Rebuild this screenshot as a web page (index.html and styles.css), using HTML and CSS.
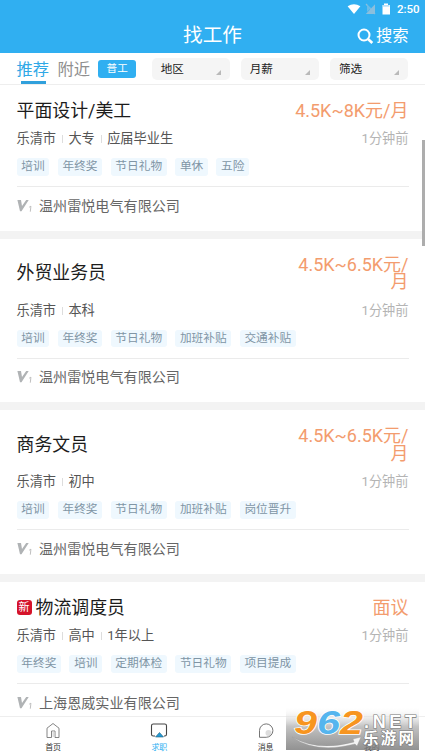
FILE: index.html
```html
<!DOCTYPE html>
<html lang="zh-CN">
<head>
<meta charset="utf-8">
<title>找工作</title>
<link rel="stylesheet" href="styles.css">
</head>
<body>
<svg class="defs" width="0" height="0">
  <symbol id="level" viewBox="0 0 16 14">
    <path d="M.4 1H4L5 7 9.200 1h2.500L4.500 12.200H3z" fill="#b0b3b5"/>
    <path d="M12.200 8.200l1.700-1-.6 5.500" fill="none" stroke="#b8b8b8" stroke-width=".9"/>
  </symbol>
</svg>
<div class="app">
  <header class="header">
    <div class="status">
      <svg class="status-icons" width="44" height="14" viewBox="0 0 44 14">
        <path d="M.6 4.300Q7 0 13.400 4.300L7 12z" fill="#fff"/>
        <path d="M28 2.200V12h-9.200z" fill="#8bbfdd"/>
        <path d="M19 2l9 10" stroke="#8bbfdd" stroke-width="1.200"/>
        <path d="M20 3v7l4-4z" fill="#69bce9"/>
        <path d="M37 1.500h4V3h2v9.500h-7.500V3H37z" fill="#fff"/>
        <path d="M36 3h6.500v1.700H36z" fill="#b9e1f8"/>
      </svg>
      <span>2:50</span>
    </div>
    <div class="titlebar">
      <h1>找工作</h1>
      <div class="search">
        <svg width="17" height="17" viewBox="0 0 17 17"><circle cx="7" cy="7" r="5.500" fill="none" stroke="#fff" stroke-width="2"/><path d="M11 11l4.300 4" stroke="#fff" stroke-width="2.600"/></svg>
        <span>搜索</span>
      </div>
    </div>
  </header>
  <nav class="filters">
    <span class="tab active">推荐</span><span class="tab">附近</span><span class="chip">普工</span>
    <div class="drop">地区</div><div class="drop">月薪</div><div class="drop">筛选</div>
  </nav>
  <main class="list">
    <article class="card">
      <div class="top"><h2>平面设计/美工</h2><b class="pay">4.5K~8K元/月</b></div>
      <div class="meta"><span>乐清市</span><span>大专</span><span>应届毕业生</span><time>1分钟前</time></div>
      <div class="tags"><i>培训</i><i>年终奖</i><i>节日礼物</i><i>单休</i><i>五险</i></div>
      <div class="company"><svg width="16" height="14"><use href="#level"/></svg>温州雷悦电气有限公司</div>
    </article>
    <article class="card">
      <div class="top"><h2>外贸业务员</h2><b class="pay">4.5K~6.5K元/<br>月</b></div>
      <div class="meta"><span>乐清市</span><span>本科</span><time>1分钟前</time></div>
      <div class="tags"><i>培训</i><i>年终奖</i><i>节日礼物</i><i>加班补贴</i><i>交通补贴</i></div>
      <div class="company"><svg width="16" height="14"><use href="#level"/></svg>温州雷悦电气有限公司</div>
    </article>
    <article class="card">
      <div class="top"><h2>商务文员</h2><b class="pay">4.5K~6.5K元/<br>月</b></div>
      <div class="meta"><span>乐清市</span><span>初中</span><time>1分钟前</time></div>
      <div class="tags"><i>培训</i><i>年终奖</i><i>节日礼物</i><i>加班补贴</i><i>岗位晋升</i></div>
      <div class="company"><svg width="16" height="14"><use href="#level"/></svg>温州雷悦电气有限公司</div>
    </article>
    <article class="card">
      <div class="top"><em class="new">新</em><h2>物流调度员</h2><b class="pay">面议</b></div>
      <div class="meta"><span>乐清市</span><span>高中</span><span>1年以上</span><time>1分钟前</time></div>
      <div class="tags"><i>年终奖</i><i>培训</i><i>定期体检</i><i>节日礼物</i><i>项目提成</i></div>
      <div class="company"><svg width="16" height="14"><use href="#level"/></svg>上海恩威实业有限公司</div>
    </article>
  </main>
  <nav class="bottom">
    <div class="item">
      <svg width="18" height="18" viewBox="0 0 18 18" fill="none" stroke="#777" stroke-width=".9"><path d="M3 16.500V7.200L9 2.500l6 4.700v9.300h-4V10H7.500v6.500z"/><path d="M8.500 10.500h2v5.500h-2z" fill="#ddd" stroke="none"/></svg>
      <span>首页</span>
    </div>
    <div class="item on">
      <svg width="18" height="18" viewBox="0 0 18 18"><path d="M5 15H3.300Q1.500 15 1.500 13.200V4.800Q1.500 3 3.300 3h11.400q1.800 0 1.800 1.800v8.400q0 1.800-1.800 1.800H14" fill="none" stroke="#444" stroke-width="1.100"/><path d="M5.500 16l4-4.500 4 4.500z" fill="#249bd5" stroke="#24617e" stroke-width=".6"/></svg>
      <span>求职</span>
    </div>
    <div class="item">
      <svg width="18" height="18" viewBox="0 0 18 18"><circle cx="11.500" cy="12" r="3" fill="#ddd"/><path d="M2.500 16.300V9.500a6.700 6.700 0 1 1 6.700 6.800z" fill="none" stroke="#666" stroke-width=".9"/></svg>
      <span>消息</span>
    </div>
    <div class="item"><svg width="18" height="18"></svg><span>我的</span></div>
  </nav>
  <div class="scrollbar"></div>
  <svg class="watermark" width="133" height="43" viewBox="0 0 133 43">
    <defs>
      <linearGradient id="shade" x2="0" y2="1"><stop offset="0" stop-color="#fff" stop-opacity=".1"/><stop offset=".45" stop-color="#bdbdbd" stop-opacity=".9"/><stop offset="1" stop-color="#777" stop-opacity=".8"/></linearGradient>
    </defs>
    <rect width="133" height="43" fill="url(#shade)"/>
    <g class="digits">
      <text x="8" y="27" textLength="23" lengthAdjust="spacingAndGlyphs" fill="#f79520">9</text>
      <text x="31" y="27" textLength="23" lengthAdjust="spacingAndGlyphs" fill="#55b5ee">6</text>
      <text x="54" y="27" textLength="23" lengthAdjust="spacingAndGlyphs" fill="#f79520">2</text>
    </g>
    <text class="net" x="78" y="21" textLength="52" lengthAdjust="spacing">.NET</text>
    <path d="M6 30Q32 45 68 35l-1-3 8-2-4 9-2-2Q30 47 6 30z" fill="#f4f4f4" stroke="#999" stroke-width=".4"/>
    <text class="site" x="77" y="37" textLength="51" lengthAdjust="spacing">乐游网</text>
  </svg>
</div>
</body>
</html>
```
FILE: styles.css
```css
* { box-sizing: border-box; }
body {
  margin: 0;
  background: #fff;
  font-family: Roboto, "Noto Sans CJK SC", sans-serif;
  color: #222;
}
h1, h2 { margin: 0; font-weight: 400; }
i, em, b { font-style: normal; font-weight: 400; }
.defs { position: absolute; }
.app {
  position: relative;
  width: 425px;
  height: 756px;
  overflow: hidden;
  display: flex;
  flex-direction: column;
}
.header { flex: none; height: 53px; background: #30aff1; color: #fff; }
.status {
  height: 18px;
  display: flex;
  justify-content: flex-end;
  align-items: center;
  gap: 5px;
  padding-right: 6px;
  font-size: 11.500px;
  font-weight: 500;
}
.status span { width: 22px; line-height: 18px; }
.status-icons { margin-right: 1px; }
.titlebar {
  height: 35px;
  display: grid;
  grid-template-columns: 1fr auto 1fr;
  align-items: center;
  padding: 1px 16.500px 0;
}
.titlebar h1 { grid-column: 2; font-size: 19.600px; line-height: 34px; }
.search {
  justify-self: end;
  display: flex;
  align-items: center;
  gap: 2px;
  font-size: 16.300px;
  line-height: 34px;
}
.filters {
  flex: none;
  height: 32px;
  display: flex;
  align-items: center;
  padding: 0 17px 0 16.500px;
  border-bottom: 1px solid #eee;
}
.tab {
  flex: none;
  height: 31px;
  line-height: 34px;
  font-size: 16.300px;
  white-space: nowrap;
  color: #8f8f8f;
  margin-right: 8.500px;
}
.tab.active {
  color: #30a8e6;
  background: linear-gradient(#30a0dc, #30a0dc) 4.500px 100% / 25px 3.500px no-repeat;
}
.chip {
  flex: none;
  width: 38px;
  height: 18px;
  margin: 0 15.500px 0 -.5px;
  border-radius: 3px;
  background: #30aff1;
  color: #fff;
  font-size: 10.600px;
  line-height: 18px;
  text-align: center;
}
.drop {
  flex: 1;
  height: 22px;
  margin-right: 11px;
  padding: 0 9px;
  border-radius: 5px;
  background: #f5f5f5;
  font-size: 11.600px;
  line-height: 22px;
  display: flex;
  justify-content: space-between;
}
.drop:last-child { margin-right: 0; }
.drop::after {
  content: "";
  align-self: flex-end;
  margin-bottom: 4.500px;
  border-left: 5px solid transparent;
  border-bottom: 5px solid #b9b9b9;
}
.list { flex: 1; min-height: 0; overflow: hidden; }
.card {
  padding: 16.600px 16.500px 0;
  border-bottom: 8px solid #f3f3f3;
}
.top { display: flex; align-items: center; line-height: 17.500px; }
.top h2 { font-size: 17.900px; color: #1c1c1c; }
.pay { margin-left: auto; text-align: right; font-size: 18px; color: #f39c6e; }
.new {
  width: 15px;
  height: 15px;
  margin-right: 4px;
  border-radius: 3px;
  background: #d5132a;
  color: #fff;
  font-size: 11px;
  line-height: 15px;
  text-align: center;
}
.meta {
  display: flex;
  align-items: center;
  height: 18px;
  margin-top: 11px;
  font-size: 13.200px;
  line-height: 18px;
  color: #555;
}
.meta span + span { display: flex; align-items: center; }
.meta span + span::before { content: ""; width: 1px; height: 8px; margin: 0 5.700px; background: #ddd; }
.meta time { margin-left: auto; color: #b4b4b4; }
.tags { display: flex; gap: 8.200px; margin-top: 10.200px; }
.tags i {
  height: 17.500px;
  padding: 0 4.800px;
  border-radius: 3px;
  background: #eff8fe;
  color: #8095a5;
  font-size: 11.700px;
  line-height: 17px;
}
.company {
  display: flex;
  align-items: center;
  gap: 6.500px;
  height: 44.900px;
  margin-top: 10.300px;
  padding-bottom: 6.200px;
  border-top: 1px solid #ebebeb;
  font-size: 14.100px;
  line-height: 18px;
  color: #666;
}
.bottom {
  flex: none;
  height: 40px;
  display: grid;
  grid-template-columns: repeat(4, 1fr);
  border-top: 1px solid #eee;
  background: #fff;
}
.item {
  display: flex;
  flex-direction: column;
  align-items: center;
  padding-top: 4px;
  font-size: 8px;
  line-height: 18px;
  color: #333;
}
.item.on { color: #30aff1; }
.scrollbar { position: absolute; right: 0; top: 140px; width: 3px; height: 106px; background: #adadad; }
.watermark { position: absolute; left: 286px; top: 707px; overflow: visible; }
.digits text {
  font: italic 700 33px "Liberation Sans", sans-serif;
  stroke: #fff;
  stroke-width: 1.500px;
  paint-order: stroke;
}
.net { font: 700 18px "Liberation Sans", sans-serif; fill: #fff; stroke: #777; stroke-width: 1.200px; paint-order: stroke; }
.site { font: 700 15.500px "Noto Sans CJK SC", sans-serif; fill: #fff; stroke: #777; stroke-width: 1px; paint-order: stroke; }
```
